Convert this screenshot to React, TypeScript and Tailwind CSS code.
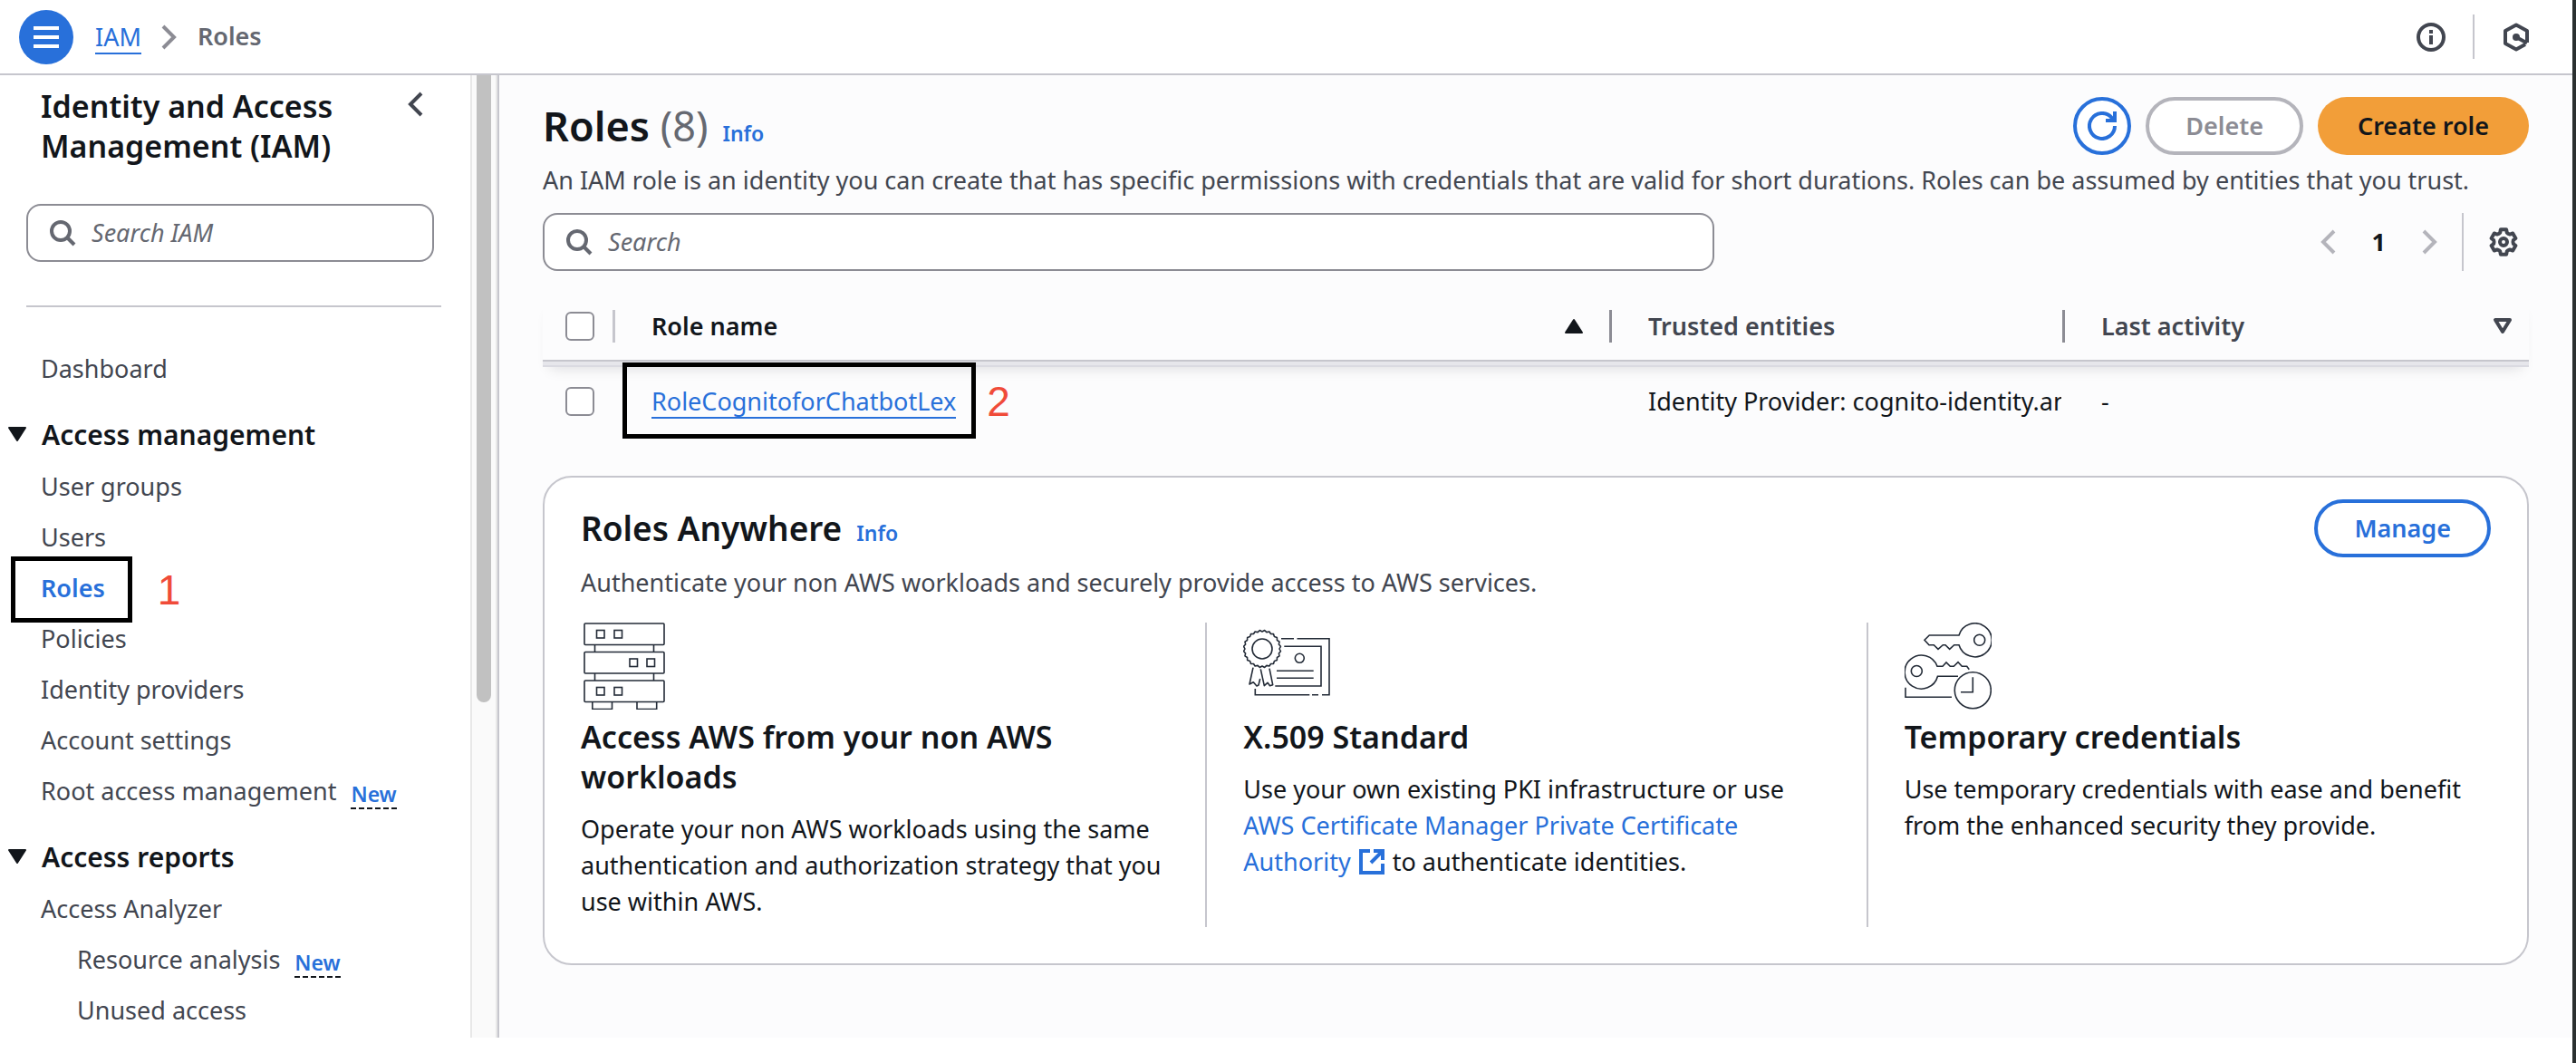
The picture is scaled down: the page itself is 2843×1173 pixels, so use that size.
import type { ReactNode } from 'react'

function Icon({ children, className = 'size-8', width = 2 }: { children: ReactNode; className?: string; width?: number }) {
  return (
    <svg viewBox="0 0 16 16" fill="none" stroke="currentColor" strokeWidth={width} className={`shrink-0 ${className}`} aria-hidden="true">
      {children}
    </svg>
  )
}

const SearchIcon = () => (
  <Icon className="size-8 text-[#656871]">
    <circle cx="7" cy="7" r="5" />
    <path d="m10.5 10.5 4 4" />
  </Icon>
)
const AngleLeft = () => (
  <Icon>
    <path d="M11 2 5 8l6 6" />
  </Icon>
)
const AngleRight = () => (
  <Icon>
    <path d="m5 2 6 6-6 6" />
  </Icon>
)

function polarPath(cx: number, cy: number, steps: [number, number][]) {
  return (
    steps
      .map(([r, deg], i) => {
        const a = (deg * Math.PI) / 180
        return `${i ? 'L' : 'M'}${(cx + r * Math.sin(a)).toFixed(2)} ${(cy - r * Math.cos(a)).toFixed(2)}`
      })
      .join('') + 'Z'
  )
}

const GEAR = polarPath(
  16,
  16,
  [0, 60, 120, 180, 240, 300].flatMap((a): [number, number][] => [
    [11, a - 20],
    [14, a - 13],
    [14, a + 13],
    [11, a + 20],
    [10.5, a + 30],
  ]),
)
const SEAL = polarPath(
  21,
  29,
  Array.from({ length: 48 }, (_, i): [number, number] => [i % 2 ? 20.6 : 19, i * 7.5]),
)

function ServersArt() {
  return (
    <svg viewBox="0 0 96 96" fill="none" stroke="#232b37" strokeWidth="1.6" className="size-24" aria-hidden="true">
      {[1, 32.5, 64].map((y) => (
        <rect key={y} x="4" y={y} width="88" height="23.5" rx="1" />
      ))}
      <path d="M15.5 24.5v8M80.5 24.5v8M15.5 56v8M80.5 56v8M12.8 88v7.5h21.7V88M62 88v7.5h21.7V88" />
      {[
        [17.5, 8.5],
        [37, 8.5],
        [54, 40],
        [73, 40],
        [17.5, 71.5],
        [37, 71.5],
      ].map(([x, y]) => (
        <rect key={`${x}-${y}`} x={x} y={y} width="8.5" height="8.5" />
      ))}
    </svg>
  )
}

function CertificateArt() {
  return (
    <svg viewBox="0 0 96 96" fill="none" stroke="#232b37" strokeWidth="1.6" className="size-24" aria-hidden="true">
      <path d={SEAL} strokeLinejoin="round" />
      <circle cx="21" cy="29" r="11" />
      <path d="M42 17.7h14M59.5 17.7H95v62h-8M83 79.7h-7M73.3 79.7h-60V73M45.3 26.3H86V70H35.3M37 53.3h40.7M37 61.3h40.7" />
      <circle cx="62.3" cy="39.3" r="5" />
      <path
        strokeLinejoin="round"
        d="M11 49.7 7 68l4.3-2.3L15 70l2-1 1.7-7M19.3 51.3l4 18.4 3.7-3.4 2.5 3.4 3.2-1L29 50.7"
      />
    </svg>
  )
}

function KeysArt() {
  return (
    <svg viewBox="0 0 96 96" fill="none" stroke="#232b37" strokeWidth="1.6" className="size-24" aria-hidden="true">
      <path d="M60 14H27.3L22 19.3l5 5.4h5.3l4.7 4.6 5.3-4.6H45l4.7 4.6 5-4.6H60A18.5 18.5 0 1 0 60 14Z" />
      <circle cx="82.7" cy="19.3" r="6" />
      <path d="M59 59.3H36.5A18.5 18.5 0 1 1 36 48.3h6l4-4.3 4.3 4.3h4l4.7-4.6 4.3 4.6h5.4l2.6 3.4" />
      <circle cx="13.3" cy="53.5" r="6" />
      <circle cx="75.3" cy="74.7" r="20" />
      <path d="M75.3 60.3v16.4H62M1 71.7v10.6h51" />
    </svg>
  )
}

function NewBadge() {
  return (
    <button type="button" className="mt-2 ml-4 h-8 border-b-2 border-dashed border-[#12161b] text-[23px] leading-7 font-semibold text-[#2870da]">
      New
    </button>
  )
}

function NavLink({ children, indent = false, isNew = false }: { children: ReactNode; indent?: boolean; isNew?: boolean }) {
  return (
    <li className={`flex h-14 items-center ${indent ? 'pl-10' : ''}`}>
      <a href="#" className="text-[#424650]">
        {children}
      </a>
      {isNew && <NewBadge />}
    </li>
  )
}

function NavSection({ title, children }: { title: string; children: ReactNode }) {
  return (
    <section className="mt-4">
      <button type="button" aria-expanded="true" className="-ml-[37px] flex h-14 items-center gap-4 text-[30px] font-semibold text-[#12161b]">
        <svg viewBox="0 0 22 18" className="h-[18px] w-[22px]" fill="currentColor" stroke="currentColor" strokeWidth="2" strokeLinejoin="round" aria-hidden="true">
          <path d="M2 2h18l-9 14Z" />
        </svg>
        {title}
      </button>
      <ul className="mt-0.5">{children}</ul>
    </section>
  )
}

function Sidebar() {
  return (
    <div className="flex w-[551px] shrink-0 border-r-2 border-[#c6c6cd] bg-white">
      <nav aria-label="Identity and Access Management" className="flex-1 pt-3 pr-8 pb-0.5 pl-[29px]">
        <div className="flex items-start justify-between pr-3 pl-4">
          <h2 className="w-[340px] text-[34px] leading-[44px] font-semibold text-[#12161b]">Identity and Access Management (IAM)</h2>
          <button type="button" aria-label="Close navigation" className="mt-1 text-[#424650]">
            <AngleLeft />
          </button>
        </div>
        <label className="mt-[42px] mr-2 flex h-16 items-center gap-4 rounded-2xl border-2 border-[#8c8c94] px-[22px]">
          <SearchIcon />
          <input
            type="search"
            aria-label="Search IAM"
            placeholder="Search IAM"
            className="w-full min-w-0 bg-transparent text-[27px] outline-none placeholder:text-[#656871] placeholder:italic"
          />
        </label>
        <hr className="mt-12 border-t-2 border-[#c6c6cd]" />
        <div className="mt-10 pl-4 text-[27px]">
          <ul>
            <NavLink>Dashboard</NavLink>
          </ul>
          <NavSection title="Access management">
            <NavLink>User groups</NavLink>
            <NavLink>Users</NavLink>
            <li className="flex h-14 items-center">
              <a href="#" aria-current="page" className="relative font-semibold text-[#2870da]">
                Roles
                <span className="absolute -top-[15px] -left-[33px] h-[73px] w-[134px] border-5 border-black" />
              </a>
              <span className="mt-1 ml-[58px] font-['Liberation_Sans',sans-serif] text-[46px] leading-none text-[#f04b39]">1</span>
            </li>
            <NavLink>Policies</NavLink>
            <NavLink>Identity providers</NavLink>
            <NavLink>Account settings</NavLink>
            <NavLink isNew>Root access management</NavLink>
          </NavSection>
          <NavSection title="Access reports">
            <NavLink>Access Analyzer</NavLink>
            <NavLink indent isNew>
              Resource analysis
            </NavLink>
            <NavLink indent>Unused access</NavLink>
          </NavSection>
        </div>
      </nav>
      <div className="flex w-[30px] justify-center border-x-2 border-[#e8e8e8] bg-[#fafafa]">
        <div className="h-[692px] w-4 rounded-b-full bg-[#c1c1c1]" />
      </div>
    </div>
  )
}

function Checkbox({ label }: { label: string }) {
  return (
    <input type="checkbox" aria-label={label} className="block size-8 appearance-none rounded-md border-2 border-[#8c8c94] bg-white" />
  )
}

function HeaderCell({ children, last = false }: { children: ReactNode; last?: boolean }) {
  return (
    <div className={`flex h-9 items-center justify-between pl-10 ${last ? 'pr-[18px]' : ''}`}>
      {children}
      {!last && <span className="h-9 w-[3px] bg-[#8c8c94]" />}
    </div>
  )
}

function RolesTable() {
  return (
    <table className="mt-6 w-full table-fixed border-separate border-spacing-0 text-left">
      <colgroup>
        <col className="w-20" />
        <col />
        <col className="w-[500px]" />
        <col className="w-[512px]" />
      </colgroup>
      <thead className="text-[27px] text-[#424650] shadow-[0_4px_0_#e6e6eb,0_6px_0_#dadae1,0_16px_14px_-8px_rgba(0,7,22,0.12)]">
        <tr>
          <th className="border-b-2 border-[#c6c6cd] p-0">
            <div className="flex h-[74px] items-center justify-between pl-[25px]">
              <Checkbox label="Select all roles" />
              <span className="h-9 w-[3px] bg-[#c6c6cd]" />
            </div>
          </th>
          <th className="border-b-2 border-[#c6c6cd] p-0 font-semibold text-[#12161b]" aria-sort="ascending">
            <HeaderCell>
              <button type="button">Role name</button>
              <svg viewBox="0 0 22 18" className="mr-7 ml-auto h-[18px] w-[22px]" fill="currentColor" stroke="currentColor" strokeWidth="2" strokeLinejoin="round" aria-hidden="true">
                <path d="M2 16h18L11 2Z" />
              </svg>
            </HeaderCell>
          </th>
          <th className="border-b-2 border-[#c6c6cd] p-0 font-semibold">
            <HeaderCell>Trusted entities</HeaderCell>
          </th>
          <th className="border-b-2 border-[#c6c6cd] p-0 font-semibold">
            <HeaderCell last>
              <button type="button">Last activity</button>
              <svg viewBox="0 0 22 20" className="h-5 w-[22px]" fill="none" stroke="currentColor" strokeWidth="4" strokeLinejoin="round" aria-hidden="true">
                <path d="M3 3h16l-8 13Z" />
              </svg>
            </HeaderCell>
          </th>
        </tr>
      </thead>
      <tbody className="text-[27px] text-[#12161b]">
        <tr className="h-[88px]">
          <td className="p-0 pl-[25px]">
            <Checkbox label="Select RoleCognitoforChatbotLex" />
          </td>
          <td className="p-0 pl-10">
            <div className="flex items-center">
              <a href="#" className="relative h-[38px] border-b-2 border-[#2870da] leading-[38px] text-[#2870da]">
                RoleCognitoforChatbotLex
                <span className="absolute -top-6 -left-8 h-[84px] w-[390px] border-5 border-black" />
              </a>
              <span className="ml-[34px] font-['Liberation_Sans',sans-serif] text-[46px] leading-none text-[#f04b39]">2</span>
            </div>
          </td>
          <td className="p-0 pr-1 pl-10">
            <div className="overflow-hidden whitespace-nowrap">Identity Provider: cognito-identity.amazonaws.com</div>
          </td>
          <td className="p-0 pl-10">-</td>
        </tr>
      </tbody>
    </table>
  )
}

function Feature({ art, title, first = false, children }: { art: ReactNode; title: string; first?: boolean; children: ReactNode }) {
  return (
    <div className={`px-10 pb-2 ${first ? '' : 'border-l-2 border-[#c6c6cd]'}`}>
      {art}
      <h3 className="mt-2 text-[34px] leading-[44px] font-semibold">{title}</h3>
      <p className="mt-4 text-[27px] leading-10">{children}</p>
    </div>
  )
}

function RolesAnywhere() {
  return (
    <section className="mt-[38px] rounded-4xl border-2 border-[#c6c6cd] bg-white px-10 pt-6 pb-10 text-[#12161b]">
      <div className="flex h-16 items-center justify-between">
        <div className="flex items-baseline gap-4">
          <h2 className="text-[37px] font-semibold">Roles Anywhere</h2>
          <a href="#" className="text-[23px] font-semibold text-[#2870da]">
            Info
          </a>
        </div>
        <button type="button" className="h-16 rounded-full border-4 border-[#2870da] px-10 text-[27px] font-semibold text-[#2870da]">
          Manage
        </button>
      </div>
      <p className="mt-2 text-[27px] leading-10 text-[#424650]">Authenticate your non AWS workloads and securely provide access to AWS services.</p>
      <div className="-mx-10 mt-6 grid grid-cols-3">
        <Feature first art={<ServersArt />} title="Access AWS from your non AWS workloads">
          Operate your non AWS workloads using the same authentication and authorization strategy that you use within AWS.
        </Feature>
        <Feature art={<CertificateArt />} title="X.509 Standard">
          Use your own existing PKI infrastructure or use{' '}
          <a href="#" className="text-[#2870da]">
            AWS Certificate Manager Private Certificate Authority{' '}
            <svg viewBox="0 0 16 16" fill="none" stroke="currentColor" strokeWidth="2" className="inline size-8 align-[-6px]" aria-hidden="true">
              <path d="M7 2H2v12h12V9M14 7V1M9 2h6M14 2 7.5 8.5" />
            </svg>
          </a>{' '}
          to authenticate identities.
        </Feature>
        <Feature art={<KeysArt />} title="Temporary credentials">
          Use temporary credentials with ease and benefit from the enhanced security they provide.
        </Feature>
      </div>
    </section>
  )
}

function TopBar() {
  return (
    <header className="flex h-[83px] items-center border-b-2 border-[#c6c6cd] pr-[46px] pl-[21px]">
      <button type="button" aria-label="Toggle navigation" className="flex size-[60px] items-center justify-center rounded-full bg-[#2870da] text-white">
        <svg viewBox="0 0 28 24" className="h-6 w-7" fill="currentColor" aria-hidden="true">
          <path d="M0 0h28v4H0zM0 10h28v4H0zM0 20h28v4H0z" />
        </svg>
      </button>
      <nav aria-label="Breadcrumb" className="ml-6 flex items-center text-[27px]">
        <a href="#" className="h-[38px] border-b-2 border-[#2870da] leading-[38px] text-[#2870da]">
          IAM
        </a>
        <span className="ml-3.5 text-[#8c8c94]">
          <AngleRight />
        </span>
        <span className="ml-4 font-semibold text-[#656871]">Roles</span>
      </nav>
      <div className="ml-auto flex items-center text-[#424650]">
        <button type="button" aria-label="Information">
          <Icon>
            <circle cx="8" cy="8" r="7" />
            <path d="M8 4v2M8 7v5" />
          </Icon>
        </button>
        <span className="mx-[30px] h-[49px] w-0.5 bg-[#c6c6cd]" />
        <button type="button" aria-label="Amazon Q">
          <svg viewBox="0 0 32 32" fill="none" stroke="currentColor" strokeWidth="4" strokeLinejoin="round" className="size-8" aria-hidden="true">
            <path d="M28 22V9L16 2.5 4 9v14l12 6.5L26 24M16 16l12 6.5" />
            <circle cx="16" cy="16" r="4" fill="currentColor" stroke="none" />
          </svg>
        </button>
      </div>
    </header>
  )
}

export default function App() {
  return (
    <div className="min-h-screen border-r-4 border-[#2b3030] bg-white font-['Noto_Sans','Open_Sans',sans-serif]">
      <TopBar />
      <div className="flex bg-[#fcfcfd]">
        <Sidebar />
        <main className="min-w-0 flex-1 px-12 pt-6">
          <div className="flex h-16 items-center justify-between">
            <div className="flex items-baseline">
              <h1 className="text-[45px] leading-[56px] font-semibold text-[#12161b]">
                Roles <span className="font-normal text-[#656871]">(8)</span>
              </h1>
              <a href="#" className="ml-4 text-[23px] font-semibold text-[#2870da]">
                Info
              </a>
            </div>
            <div className="flex gap-4 text-[27px] font-semibold">
              <button type="button" aria-label="Refresh" className="flex size-16 items-center justify-center rounded-full border-4 border-[#2870da] bg-white text-[#2870da]">
                <Icon>
                  <path d="M15 8a7 7 0 1 1-1.8-4.7L15 5M10 5h5V0" />
                </Icon>
              </button>
              <button type="button" disabled className="h-16 rounded-full border-4 border-[#b4b4bb] bg-white px-10 text-[#8c8c94]">
                Delete
              </button>
              <button type="button" className="h-16 rounded-full bg-[#f29e39] px-11 text-[#12161b]">
                Create role
              </button>
            </div>
          </div>
          <p className="mt-2 text-[27px] leading-10 text-[#424650]">
            An IAM role is an identity you can create that has specific permissions with credentials that are valid for short durations. Roles can be assumed by
            entities that you trust.
          </p>
          <div className="mt-4 flex items-center justify-between">
            <label className="flex h-16 w-[59%] items-center gap-4 rounded-2xl border-2 border-[#8c8c94] bg-white px-[22px]">
              <SearchIcon />
              <input
                type="search"
                aria-label="Search"
                placeholder="Search"
                className="w-full min-w-0 bg-transparent text-[27px] outline-none placeholder:text-[#656871] placeholder:italic"
              />
            </label>
            <div className="flex items-center pr-3">
              <nav aria-label="Pagination" className="flex items-center gap-8 text-[#b4b4bb]">
                <button type="button" disabled aria-label="Previous page">
                  <AngleLeft />
                </button>
                <button type="button" aria-current="page" className="text-[27px] font-bold text-[#12161b]">
                  1
                </button>
                <button type="button" disabled aria-label="Next page">
                  <AngleRight />
                </button>
              </nav>
              <span className="mr-7 ml-5 h-16 w-0.5 bg-[#c6c6cd]" />
              <button type="button" aria-label="Preferences" className="text-[#424650]">
                <svg viewBox="0 0 32 32" fill="none" stroke="currentColor" strokeWidth="4" strokeLinejoin="round" className="size-8" aria-hidden="true">
                  <path d={GEAR} />
                  <circle cx="16" cy="16" r="4" />
                </svg>
              </button>
            </div>
          </div>
          <RolesTable />
          <RolesAnywhere />
        </main>
      </div>
    </div>
  )
}
